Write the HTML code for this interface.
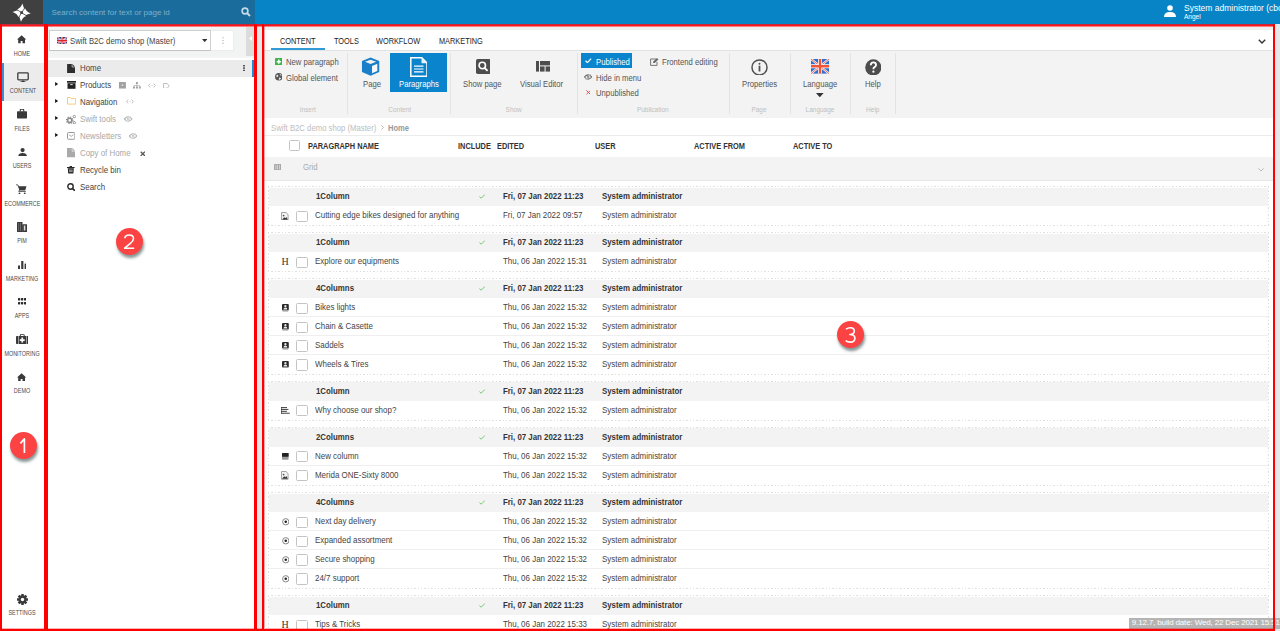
<!DOCTYPE html>
<html><head><meta charset="utf-8">
<style>
*{box-sizing:border-box;margin:0;padding:0}
html,body{width:1280px;height:631px;overflow:hidden;background:#fff;font-family:"Liberation Sans",sans-serif;color:#333}
.a{position:absolute}
.t{position:absolute;white-space:nowrap;line-height:1}
#top{left:0;top:0;width:1280px;height:24px;background:#0784c6}
#logo{left:0;top:0;width:43px;height:24px;background:#404040}
#srch{left:43px;top:0;width:212px;height:24px;background:#196c9b}
.nav{left:0;width:44px;height:37.5px}
.nav .t{width:44px;text-align:center;font-size:5.6px;color:#444;top:25px;left:0}
.nav svg{position:absolute;left:16px;top:8px}
.nl{left:0;width:44px;text-align:center;font-size:6.8px;color:#4a4a4a;transform:scaleX(0.8)}
.tab{top:36.7px;font-size:8.5px;color:#222;transform:scaleX(0.865);transform-origin:0 0}
.sep{top:53.3px;width:1px;height:60.4px;background:#e3e3e3}
.glab{top:107.2px;font-size:6.5px;color:#c0c0c0;width:40px;text-align:center}
.rb{font-size:8.4px;color:#555;transform:scaleX(0.92);transform-origin:0 0;margin-top:0.4px}
.th{top:142px;font-size:8.6px;font-weight:bold;color:#333;transform:scaleX(0.86);transform-origin:0 0}
.cb{position:absolute;left:296.4px;width:11.8px;height:11.2px;margin-top:-0.2px;border:1px solid #c4c4c4;border-radius:1.5px;background:#fff}
.dh{left:267.5px;width:1001px;height:1px;background:repeating-linear-gradient(90deg,#e0e0e0 0 1.4px,transparent 1.4px 3.4px)}
.dv{width:1px;background:repeating-linear-gradient(180deg,#e0e0e0 0 1.4px,transparent 1.4px 3.4px)}
.hb{font-size:8.7px;font-weight:bold;color:#333;transform:scaleX(0.905);transform-origin:0 0;margin-top:-0.6px}
.rr{font-size:8.7px;color:#444;transform:scaleX(0.915);transform-origin:0 0;margin-top:-0.6px}
.tr{font-size:8.7px;transform:scaleX(0.91);transform-origin:0 0}
.red{position:absolute;background:#ff0000}
.circ{position:absolute;width:27px;height:27px;border-radius:50%;background:#fb4343;box-shadow:1px 3px 3px rgba(40,60,60,.55);color:#fff;font-size:17px;text-align:center;line-height:27px}
</style></head><body>
<!-- top bar -->
<div id="top" class="a"></div>
<div id="logo" class="a">
<svg class="a" style="left:12.3px;top:2.8px" width="19.4" height="19.4" viewBox="-10 -10 20 20"><g fill="#fff"><path d="M-9.4 -0.7 L-1.9 -3.3 L-1.1 1 L-3.4 4.8 Q-4.6 0.9 -9.4 -0.7Z"/><path d="M-9.4 -0.7 L-1.9 -3.3 L-1.1 1 L-3.4 4.8 Q-4.6 0.9 -9.4 -0.7Z" transform="rotate(90)"/><path d="M-9.4 -0.7 L-1.9 -3.3 L-1.1 1 L-3.4 4.8 Q-4.6 0.9 -9.4 -0.7Z" transform="rotate(180)"/><path d="M-9.4 -0.7 L-1.9 -3.3 L-1.1 1 L-3.4 4.8 Q-4.6 0.9 -9.4 -0.7Z" transform="rotate(270)"/></g><g stroke="#404040" stroke-width="0.8"><path d="M-0.3 0.3 L-3.3 5.3"/><path d="M-0.3 0.3 L-3.3 5.3" transform="rotate(90)"/><path d="M-0.3 0.3 L-3.3 5.3" transform="rotate(180)"/><path d="M-0.3 0.3 L-3.3 5.3" transform="rotate(270)"/></g><rect x="-1.1" y="-1.1" width="2.2" height="2.2" fill="#404040" transform="rotate(20)"/></svg>
</div>
<div id="srch" class="a">
<div class="t" style="left:8.5px;top:8.5px;font-size:8px;color:#7fb0cc">Search content for text or page id</div>
<svg class="a" style="left:198px;top:7px" width="10" height="10" viewBox="0 0 10 10"><circle cx="4" cy="4" r="2.9" fill="none" stroke="#c8dce8" stroke-width="1.6"/><path d="M6 6 L9 9" stroke="#c8dce8" stroke-width="1.8"/></svg>
</div>
<svg class="a" style="left:1164px;top:5px" width="12" height="12" viewBox="0 0 12 12"><circle cx="6" cy="3" r="2.8" fill="#fff"/><path d="M0 12 Q0 7 6 7 Q12 7 12 12Z" fill="#fff"/></svg>
<div class="t" style="left:1184.3px;top:4px;font-size:9px;color:#fff;transform:scaleX(0.945);transform-origin:0 0">System administrator (cbo</div>
<div class="t" style="left:1184px;top:13.5px;font-size:6.5px;color:#fff">Angel</div>

<!-- left nav -->
<div class="a" style="left:0;top:24px;width:44px;height:607px;background:#fff"></div>
<div class="a" style="left:0;top:63px;width:44px;height:37.5px;background:#ececec"></div>
<div class="a" style="left:2px;top:63px;width:1.5px;height:37.5px;background:#3d8fd0"></div>
<svg class="a" style="left:17.4px;top:35.3px" width="9.2" height="8.6" viewBox="0 0 10 9.3"><path d="M5 0.3 L0 4.8 L1.3 4.8 L1.3 9 L4 9 L4 6.5 L6 6.5 L6 9 L8.7 9 L8.7 4.8 L10 4.8Z" fill="#3a3a3a"/></svg>
<div class="t nl" style="top:50.6px">HOME</div>
<svg class="a" style="left:17.3px;top:72px" width="12" height="10" viewBox="0 0 12 10"><rect x="0.8" y="0.8" width="10.4" height="7" rx="0.8" fill="none" stroke="#3a3a3a" stroke-width="1.3"/><path d="M4.5 10 L6 8 L7.5 10Z" fill="#3a3a3a"/><rect x="3.5" y="9.3" width="5" height="0.8" fill="#3a3a3a"/></svg>
<div class="t nl" style="top:88.1px;left:1px">CONTENT</div>
<svg class="a" style="left:17px;top:109px" width="10" height="10" viewBox="0 0 10 10"><rect x="0" y="2.2" width="10" height="7.3" rx="0.7" fill="#3a3a3a"/><path d="M3.3 2.5 V1 Q3.3 0.2 4 0.2 H6 Q6.7 0.2 6.7 1 V2.5" fill="none" stroke="#3a3a3a" stroke-width="1.1"/></svg>
<div class="t nl" style="top:125.6px">FILES</div>
<svg class="a" style="left:17.5px;top:147.9px" width="9.2" height="8.5" viewBox="0 0 9.2 8.5"><circle cx="4.6" cy="2.1" r="2.1" fill="#3a3a3a"/><path d="M0.2 8.5 Q0.2 5.1 4.6 5.1 Q9 5.1 9 8.5Z" fill="#3a3a3a"/></svg>
<div class="t nl" style="top:163.1px">USERS</div>
<svg class="a" style="left:16px;top:183.7px" width="11" height="10.3" viewBox="0 0 11 10.3"><path d="M0 0.5 H1.8 L3 2.2 H10.5 L9.2 6.4 H3.5 L3.1 7 H9.8 V7.8 H2.2 L3.2 5.6 L1.5 1.3 H0Z" fill="#3a3a3a"/><circle cx="3.5" cy="9.3" r="0.9" fill="#3a3a3a"/><circle cx="8.7" cy="9.3" r="0.9" fill="#3a3a3a"/></svg>
<div class="t nl" style="top:200.6px">ECOMMERCE</div>
<svg class="a" style="left:16.8px;top:222px" width="10.3" height="10" viewBox="0 0 10.3 10"><rect x="0" y="0" width="5.5" height="10" rx="0.6" fill="#3a3a3a"/><rect x="5.2" y="2.3" width="5" height="7.7" rx="0.6" fill="#3a3a3a"/><g fill="#9a9a9a"><rect x="1.6" y="1" width="0.5" height="8"/><rect x="3.4" y="1" width="0.5" height="8"/><rect x="6.8" y="3.5" width="1.6" height="5" fill="#ddd"/></g></svg>
<div class="t nl" style="top:238.1px">PIM</div>
<svg class="a" style="left:17.8px;top:260.7px" width="8.6" height="8.1" viewBox="0 0 8.6 8.1"><rect x="0" y="4.5" width="2" height="3.6" fill="#3a3a3a"/><rect x="3.2" y="0" width="2.2" height="8.1" fill="#3a3a3a"/><rect x="6.6" y="2.6" width="2" height="5.5" fill="#3a3a3a"/></svg>
<div class="t nl" style="top:275.6px">MARKETING</div>
<svg class="a" style="left:18px;top:298px" width="8.2" height="6.6" viewBox="0 0 8.2 6.6"><g fill="#2a2a2a"><rect x="0" y="0" width="2.2" height="2.6" rx=".5"/><rect x="3" y="0" width="2.2" height="2.6" rx=".5"/><rect x="6" y="0" width="2.2" height="2.6" rx=".5"/><rect x="0" y="3.9" width="2.2" height="2.6" rx=".5"/><rect x="3" y="3.9" width="2.2" height="2.6" rx=".5"/><rect x="6" y="3.9" width="2.2" height="2.6" rx=".5"/></g></svg>
<div class="t nl" style="top:313.1px">APPS</div>
<svg class="a" style="left:15.6px;top:333.9px" width="12.5" height="10" viewBox="0 0 12.5 10"><rect x="0" y="2" width="12.5" height="8" rx="0.8" fill="#3a3a3a"/><path d="M4.3 2 V1 Q4.3 0.3 5 0.3 H7.5 Q8.2 0.3 8.2 1 V2" fill="none" stroke="#3a3a3a" stroke-width="1"/><path d="M5.4 3.6 H7.1 V5.2 H8.7 V6.9 H7.1 V8.5 H5.4 V6.9 H3.8 V5.2 H5.4Z" fill="#fff"/><rect x="2" y="2" width="0.5" height="8" fill="#fff"/><rect x="10" y="2" width="0.5" height="8" fill="#fff"/></svg>
<div class="t nl" style="top:350.6px">MONITORING</div>
<svg class="a" style="left:17.4px;top:372.8px" width="9.2" height="8.6" viewBox="0 0 10 9.3"><path d="M5 0.3 L0 4.8 L1.3 4.8 L1.3 9 L4 9 L4 6.5 L6 6.5 L6 9 L8.7 9 L8.7 4.8 L10 4.8Z" fill="#3a3a3a"/></svg>
<div class="t nl" style="top:388.1px">DEMO</div>
<svg class="a" style="left:16.6px;top:594.1px" width="11" height="11" viewBox="-5.5 -5.5 11 11"><g fill="#3a3a3a"><rect x="-1.35" y="-5.5" width="2.7" height="3" rx="0.4" transform="rotate(0)"/><rect x="-1.35" y="-5.5" width="2.7" height="3" rx="0.4" transform="rotate(45)"/><rect x="-1.35" y="-5.5" width="2.7" height="3" rx="0.4" transform="rotate(90)"/><rect x="-1.35" y="-5.5" width="2.7" height="3" rx="0.4" transform="rotate(135)"/><rect x="-1.35" y="-5.5" width="2.7" height="3" rx="0.4" transform="rotate(180)"/><rect x="-1.35" y="-5.5" width="2.7" height="3" rx="0.4" transform="rotate(225)"/><rect x="-1.35" y="-5.5" width="2.7" height="3" rx="0.4" transform="rotate(270)"/><rect x="-1.35" y="-5.5" width="2.7" height="3" rx="0.4" transform="rotate(315)"/><circle r="3.9"/></g><circle r="1.7" fill="#fff"/></svg>
<div class="t nl" style="top:610.4px">SETTINGS</div>


<!-- panel 2 -->
<div class="a" style="left:46px;top:24px;width:210px;height:607px;background:#fff"></div>
<div class="a" style="left:46px;top:24px;width:210px;height:34px;background:#f3f5f5"></div>


<div class="a" style="left:48px;top:26px;width:206px;height:31.2px;background:#f2f3f3"></div>
<div class="a" style="left:49.2px;top:30.3px;width:161.5px;height:20.6px;background:#fff;border:1px solid #cfcfcf;border-bottom-color:#c4c4c4"></div>
<svg class="a" style="left:57px;top:37px" width="10.2" height="7.4" viewBox="0 0 60 30" preserveAspectRatio="none"><rect width="60" height="30" fill="#2b3f8f"/><path d="M0 0 L60 30 M60 0 L0 30" stroke="#fff" stroke-width="6"/><path d="M0 0 L60 30 M60 0 L0 30" stroke="#d8232a" stroke-width="3"/><path d="M30 0 V30 M0 15 H60" stroke="#fff" stroke-width="10"/><path d="M30 0 V30 M0 15 H60" stroke="#d8232a" stroke-width="6"/></svg>
<div class="t" style="left:70.1px;top:36.6px;font-size:8.5px;color:#444;transform:scaleX(0.91);transform-origin:0 0">Swift B2C demo shop (Master)</div>
<svg class="a" style="left:201.8px;top:38.8px" width="5.4" height="3.2" viewBox="0 0 6 3.5"><path d="M0 0 H6 L3 3.5Z" fill="#333"/></svg>
<div class="a" style="left:210.5px;top:30.3px;width:23.5px;height:20.6px;background:#fff;border:1px solid #ececec;border-left:none"></div>
<svg class="a" style="left:221.5px;top:37px" width="2" height="7" viewBox="0 0 2 7"><g fill="#999"><circle cx="1" cy="0.8" r="0.6"/><circle cx="1" cy="3.5" r="0.6"/><circle cx="1" cy="6.2" r="0.6"/></g></svg>
<div class="a" style="left:246px;top:26.6px;width:8.3px;height:29.4px;background:#dcdcdc"></div>
<svg class="a" style="left:249px;top:36.3px" width="3" height="5" viewBox="0 0 3 5"><path d="M3 0 V5 L0 2.5Z" fill="#fff"/></svg>
<div class="a" style="left:48px;top:59.8px;width:206px;height:16.9px;background:#ebebeb"></div>
<div class="a" style="left:252px;top:59.8px;width:2.3px;height:17px;background:#1f87d3"></div>
<svg class="a" style="left:243px;top:65.2px" width="2" height="6.2" viewBox="0 0 2 6.2"><g fill="#333"><rect x="0.2" y="0" width="1.6" height="1.5"/><rect x="0.2" y="2.35" width="1.6" height="1.5"/><rect x="0.2" y="4.7" width="1.6" height="1.5"/></g></svg>
<svg class="a" style="left:67px;top:63.6px" width="8.2" height="9" viewBox="0 0 8 9"><path d="M0 0 H5.2 L8 2.8 V9 H0Z" fill="#2e2e2e"/><path d="M5 0.3 V3 H7.7" fill="none" stroke="#fff" stroke-width="0.6"/></svg>
<div class="t tr" style="left:80.3px;top:64.1px;color:#444">Home</div>
<svg class="a" style="left:55.4px;top:82.1px" width="3.3" height="4" viewBox="0 0 3 4"><path d="M0 0 L3 2 L0 4Z" fill="#111"/></svg>
<svg class="a" style="left:66.5px;top:81.4px" width="9" height="7.8" viewBox="0 0 9 7.8"><rect x="0" y="0" width="9" height="1.7" fill="#222"/><rect x="0.5" y="2.2" width="8" height="5.6" fill="#222"/><rect x="3.3" y="3.2" width="2.4" height="0.9" fill="#fff"/></svg>
<div class="t tr" style="left:80.3px;top:81.1px;color:#444">Products</div>
<svg class="a" style="left:55.4px;top:98.8px" width="3.3" height="4" viewBox="0 0 3 4"><path d="M0 0 L3 2 L0 4Z" fill="#111"/></svg>
<svg class="a" style="left:66.5px;top:97.4px" width="9.2" height="7.6" viewBox="0 0 9.2 7.6"><path d="M0.5 0.5 H3.5 L4.4 1.6 H8.7 V7.1 H0.5Z" fill="none" stroke="#f7c46e" stroke-width="0.9"/></svg>
<div class="t tr" style="left:80.3px;top:97.8px;color:#444">Navigation</div>
<svg class="a" style="left:55.4px;top:115.7px" width="3.3" height="4" viewBox="0 0 3 4"><path d="M0 0 L3 2 L0 4Z" fill="#111"/></svg>
<svg class="a" style="left:66px;top:114.7px" width="10" height="9.4" viewBox="0 0 10 9.4"><circle cx="3.7" cy="5.3" r="2.1" fill="none" stroke="#8a8a8a" stroke-width="1.5"/><circle cx="3.7" cy="5.3" r="3.2" fill="none" stroke="#8a8a8a" stroke-width="1.3" stroke-dasharray="1.2 1.3"/><circle cx="8.3" cy="1.6" r="1.2" fill="none" stroke="#8a8a8a" stroke-width="0.9"/><circle cx="8.3" cy="7.8" r="1.2" fill="none" stroke="#8a8a8a" stroke-width="0.9"/></svg>
<div class="t tr" style="left:80.3px;top:114.7px;color:#a8a8a8">Swift tools</div>
<svg class="a" style="left:55.4px;top:132.8px" width="3.3" height="4" viewBox="0 0 3 4"><path d="M0 0 L3 2 L0 4Z" fill="#111"/></svg>
<svg class="a" style="left:66.6px;top:132.1px" width="8.4" height="7.8" viewBox="0 0 8.4 7.8"><rect x="0.5" y="0.5" width="7.4" height="6.8" rx="1" fill="none" stroke="#999" stroke-width="1"/><path d="M1.8 2.6 L4.2 4.4 L6.6 2.6" fill="none" stroke="#999" stroke-width="0.8"/></svg>
<div class="t tr" style="left:80.3px;top:131.8px;color:#a8a8a8">Newsletters</div>
<svg class="a" style="left:66.8px;top:148.2px" width="8.2" height="9.4" viewBox="0 0 8 9"><path d="M0 0 H5.2 L8 2.8 V9 H0Z" fill="#a9a9a9"/><path d="M5 0.3 V3 H7.7" fill="none" stroke="#fff" stroke-width="0.6"/></svg>
<div class="t tr" style="left:80.3px;top:149.1px;color:#a8a8a8">Copy of Home</div>
<svg class="a" style="left:67.2px;top:166.3px" width="7.6" height="7.6" viewBox="0 0 7.6 7.6"><rect x="0" y="1" width="7.6" height="1.1" fill="#2a2a2a"/><rect x="2.6" y="0" width="2.4" height="1" fill="#2a2a2a"/><path d="M0.8 2.3 H6.8 L6.4 7.6 H1.2Z" fill="#2a2a2a"/><rect x="2" y="3.5" width="3.6" height="2.6" fill="#888"/></svg>
<div class="t tr" style="left:80.3px;top:166.0px;color:#444">Recycle bin</div>
<svg class="a" style="left:66.6px;top:183px" width="8.6" height="8.2" viewBox="0 0 8.6 8.2"><circle cx="3.5" cy="3.5" r="2.7" fill="none" stroke="#2a2a2a" stroke-width="1.4"/><path d="M5.4 5.4 L8 8" stroke="#2a2a2a" stroke-width="1.6"/></svg>
<div class="t tr" style="left:80.3px;top:182.6px;color:#444">Search</div>
<svg class="a" style="left:119.1px;top:82.2px" width="6.9" height="6.6" viewBox="0 0 7 6.6"><rect width="7" height="6.6" fill="#a0a0a0"/><rect x="2.6" y="2.4" width="1.8" height="1.6" fill="#d8d8d8"/></svg>
<svg class="a" style="left:133px;top:82.2px" width="7.8" height="6.6" viewBox="0 0 8 6.6"><g fill="#a0a0a0"><rect x="3" y="0" width="2" height="2"/><rect x="3.7" y="2" width="0.6" height="1.5"/><rect x="0.9" y="3" width="6.2" height="0.6"/><rect x="0" y="4.4" width="2" height="2.2"/><rect x="3" y="4.4" width="2" height="2.2"/><rect x="6" y="4.4" width="2" height="2.2"/></g></svg>
<svg class="a" style="left:147.8px;top:83px" width="7.8" height="5" viewBox="0 0 8 5"><path d="M2.2 0.5 L0.6 2.5 L2.2 4.5 M5.8 0.5 L7.4 2.5 L5.8 4.5" fill="none" stroke="#b8b8b8" stroke-width="0.9"/><g fill="#b8b8b8"><circle cx="3.2" cy="2.5" r="0.45"/><circle cx="4.8" cy="2.5" r="0.45"/></g></svg>
<svg class="a" style="left:163px;top:82.6px" width="6.6" height="5.8" viewBox="0 0 6.6 5.8"><path d="M0.5 0.5 H4.2 L6.1 2.9 L4.2 5.3 H0.5Z" fill="none" stroke="#b8b8b8" stroke-width="0.9"/></svg>
<svg class="a" style="left:126.4px;top:99.3px" width="7.8" height="5" viewBox="0 0 8 5"><path d="M2.2 0.5 L0.6 2.5 L2.2 4.5 M5.8 0.5 L7.4 2.5 L5.8 4.5" fill="none" stroke="#b8b8b8" stroke-width="0.9"/><g fill="#b8b8b8"><circle cx="3.2" cy="2.5" r="0.45"/><circle cx="4.8" cy="2.5" r="0.45"/></g></svg>
<svg class="a" style="left:124.3px;top:115.8px" width="8.4" height="6" viewBox="0 0 8.4 6"><path d="M0.4 3 Q4.2 -1.4 8 3 Q4.2 7.4 0.4 3Z" fill="none" stroke="#b0b0b0" stroke-width="1.1"/><circle cx="4.2" cy="3" r="1.3" fill="#b0b0b0"/><path d="M1.8 5.9 L6.6 0.1" stroke="#fff" stroke-width="1.3"/><path d="M2 5.7 L6.4 0.3" stroke="#b0b0b0" stroke-width="0.7"/></svg>
<svg class="a" style="left:128.7px;top:133.2px" width="8.4" height="6" viewBox="0 0 8.4 6"><path d="M0.4 3 Q4.2 -1.4 8 3 Q4.2 7.4 0.4 3Z" fill="none" stroke="#b0b0b0" stroke-width="1.1"/><circle cx="4.2" cy="3" r="1.3" fill="#b0b0b0"/><path d="M1.8 5.9 L6.6 0.1" stroke="#fff" stroke-width="1.3"/><path d="M2 5.7 L6.4 0.3" stroke="#b0b0b0" stroke-width="0.7"/></svg>
<svg class="a" style="left:139.8px;top:150.7px" width="5.6" height="5.6" viewBox="0 0 5.6 5.6"><path d="M0.7 0.7 L4.9 4.9 M4.9 0.7 L0.7 4.9" stroke="#555" stroke-width="1.3"/></svg>

<!-- strip -->
<div class="a" style="left:256px;top:24px;width:7px;height:607px;background:#e6e9ea"></div>
<div class="a" style="left:1274px;top:24px;width:6px;height:607px;background:#e6e9ea"></div>

<!-- panel 3 -->
<div class="a" style="left:263px;top:24px;width:1011px;height:607px;background:#fff"></div>


<!-- panel3 header -->
<div class="a" style="left:264px;top:26.5px;width:1009px;height:3.3px;background:#eef0f0"></div>
<div class="a" style="left:264px;top:49.9px;width:1009px;height:1.2px;background:#e2e2e2"></div>
<div class="a" style="left:264px;top:51px;width:1009px;height:66.8px;background:#f3f3f3"></div>
<div class="t tab" style="left:280.2px">CONTENT</div>
<div class="t tab" style="left:334.3px">TOOLS</div>
<div class="t tab" style="left:376.3px">WORKFLOW</div>
<div class="t tab" style="left:439px">MARKETING</div>
<div class="a" style="left:271.1px;top:48px;width:53.7px;height:2px;background:#2f9ad6"></div>
<svg class="a" style="left:1257.5px;top:39px" width="8" height="5" viewBox="0 0 8 5"><path d="M0.8 0.8 L4 4 L7.2 0.8" fill="none" stroke="#333" stroke-width="1.4"/></svg>
<!-- separators -->
<div class="a sep" style="left:347px"></div>
<div class="a sep" style="left:450.3px"></div>
<div class="a sep" style="left:577px"></div>
<div class="a sep" style="left:728.5px"></div>
<div class="a sep" style="left:789.8px"></div>
<div class="a sep" style="left:850px"></div>
<div class="a sep" style="left:895.3px"></div>
<!-- group labels -->
<div class="t glab" style="left:287.8px">Insert</div>
<div class="t glab" style="left:379.7px">Content</div>
<div class="t glab" style="left:493.7px">Show</div>
<div class="t glab" style="left:632.8px">Publication</div>
<div class="t glab" style="left:739px">Page</div>
<div class="t glab" style="left:800px">Language</div>
<div class="t glab" style="left:852.8px">Help</div>
<!-- insert -->
<svg class="a" style="left:274.8px;top:57.9px" width="7.6" height="7.4" viewBox="0 0 7.6 7.4"><rect width="7.6" height="7.4" rx="1" fill="#3db54a"/><path d="M3.8 1.6 V5.8 M1.7 3.7 H5.9" stroke="#fff" stroke-width="1.5"/></svg>
<div class="t rb" style="left:286px;top:58.1px">New paragraph</div>
<svg class="a" style="left:274.8px;top:73.3px" width="7.6" height="7.6" viewBox="0 0 10 10"><circle cx="5" cy="5" r="5" fill="#555"/><path d="M2 2.5 Q3.5 2 4.5 3.5 Q4 5 2.5 5.5 Q1.2 4.5 2 2.5Z M5.5 6 Q7 5.5 8 7 Q7 9 5 9.2 Q5 7.5 5.5 6Z M6 1 Q8 1.5 9 3.5 Q7.5 3.5 6.5 2.5Z" fill="#eee"/></svg>
<div class="t rb" style="left:286px;top:73.5px">Global element</div>
<!-- page cube -->
<svg class="a" style="left:361px;top:57.3px" width="19.2" height="19.3" viewBox="0 0 20 20"><path d="M10 0.5 L19 4.2 V15.5 L10 19.5 L1 15.5 V4.2Z" fill="#1a7fc8"/><path d="M10 2.8 L15.8 5 L10 7.3 L4.2 5Z" fill="#f3f3f3"/><path d="M11.5 9.2 L17 7 V14.5 L11.5 17Z" fill="#f8f8f8"/></svg>
<div class="t rb" style="left:362.6px;top:80.1px">Page</div>
<!-- paragraphs btn -->
<div class="a" style="left:390px;top:53px;width:56.8px;height:39.4px;background:#0a84cc"></div>
<svg class="a" style="left:409.6px;top:56.6px" width="17.8" height="20" viewBox="0 0 17.8 20"><path d="M0.8 0.8 H11.8 L17 6 V19.2 H0.8Z" fill="none" stroke="#fff" stroke-width="1.5"/><path d="M11.5 0.8 V6.3 H17" fill="#e8f2fa"/><path d="M4 9.2 H13.5 M4 12 H13.5 M4 14.8 H13.5" stroke="#fff" stroke-width="1.2"/></svg>
<div class="t rb" style="left:398.6px;top:80.1px;color:#fff">Paragraphs</div>
<!-- show page -->
<svg class="a" style="left:475.8px;top:58.9px" width="14.6" height="15" viewBox="0 0 14.6 15"><rect width="14.6" height="15" rx="1.8" fill="#4d4d4d"/><circle cx="6.3" cy="6.5" r="3.2" fill="none" stroke="#fff" stroke-width="1.6"/><path d="M8.6 8.9 L11.6 11.9" stroke="#fff" stroke-width="1.8"/></svg>
<div class="t rb" style="left:463.4px;top:80.1px">Show page</div>
<svg class="a" style="left:535.6px;top:61.1px" width="14.2" height="10.6" viewBox="0 0 14.2 10.6"><g fill="#4d4d4d"><rect x="0" y="0" width="3" height="10.6"/><rect x="4" y="0" width="10.2" height="4.4"/><rect x="4" y="5.4" width="4.6" height="5.2"/><rect x="9.6" y="5.4" width="4.6" height="5.2"/></g></svg>
<div class="t rb" style="left:520.1px;top:80.1px">Visual Editor</div>
<!-- publication -->
<div class="a" style="left:580.9px;top:53.3px;width:51px;height:15.2px;background:#0a84cc"></div>
<svg class="a" style="left:585px;top:57.6px" width="6.6" height="5.4" viewBox="0 0 6.6 5.4"><path d="M0.5 2.8 L2.4 4.6 L6.1 0.6" fill="none" stroke="#fff" stroke-width="1.2"/></svg>
<div class="t rb" style="left:595.6px;top:57.5px;color:#fff">Published</div>
<svg class="a" style="left:650px;top:58px" width="9" height="8" viewBox="0 0 9 8"><path d="M6 1 H0.6 V7.4 H7 V4" fill="none" stroke="#666" stroke-width="0.9"/><path d="M3 5 L3.3 3.6 L7 0 L8.4 1.4 L4.7 5Z" fill="#666"/></svg>
<div class="t rb" style="left:661.8px;top:57.5px">Frontend editing</div>
<svg class="a" style="left:583.9px;top:74.4px" width="8.2" height="6" viewBox="0 0 8.4 6"><path d="M0.4 3 Q4.2 -1.4 8 3 Q4.2 7.4 0.4 3Z" fill="none" stroke="#666" stroke-width="1.1"/><circle cx="4.2" cy="3" r="1.3" fill="#666"/><path d="M1.8 5.9 L6.6 0.1" stroke="#f3f3f3" stroke-width="1.3"/><path d="M2 5.7 L6.4 0.3" stroke="#666" stroke-width="0.7"/></svg>
<div class="t rb" style="left:595.6px;top:73.3px">Hide in menu</div>
<svg class="a" style="left:585.6px;top:90.3px" width="4.8" height="4.8" viewBox="0 0 4.8 4.8"><path d="M0.4 0.4 L4.4 4.4 M4.4 0.4 L0.4 4.4" stroke="#f04a4a" stroke-width="1"/></svg>
<div class="t rb" style="left:595.6px;top:88.6px">Unpublished</div>
<!-- properties -->
<svg class="a" style="left:750.5px;top:58.5px" width="17" height="16.8" viewBox="0 0 17 17"><circle cx="8.5" cy="8.5" r="7.6" fill="none" stroke="#505050" stroke-width="1.5"/><circle cx="8.5" cy="4.9" r="1" fill="#505050"/><rect x="7.6" y="6.8" width="1.8" height="5.8" fill="#505050"/></svg>
<div class="t rb" style="left:741.7px;top:80.1px">Properties</div>
<svg class="a" style="left:811px;top:59.3px" width="18" height="14.6" viewBox="0 0 60 48" preserveAspectRatio="none"><rect width="60" height="48" fill="#2f6fd0"/><path d="M0 0 L60 48 M60 0 L0 48" stroke="#fff" stroke-width="7"/><path d="M0 0 L60 48 M60 0 L0 48" stroke="#f0553a" stroke-width="3"/><path d="M30 0 V48 M0 24 H60" stroke="#fff" stroke-width="13"/><path d="M30 0 V48 M0 24 H60" stroke="#f0553a" stroke-width="8"/></svg>
<div class="t rb" style="left:802.8px;top:80.1px">Language</div>
<svg class="a" style="left:816px;top:92.8px" width="7.6" height="4.3" viewBox="0 0 7.6 4.3"><path d="M0 0 H7.6 L3.8 4.3Z" fill="#333"/></svg>
<svg class="a" style="left:864.7px;top:58.5px" width="16.6" height="16.8" viewBox="0 0 17 17"><circle cx="8.5" cy="8.5" r="8.3" fill="#4d4d4d"/><path d="M5.9 6.2 Q5.9 3.4 8.6 3.4 Q11.3 3.4 11.3 6 Q11.3 7.5 9.5 8.4 Q8.6 8.9 8.6 10.3" fill="none" stroke="#fff" stroke-width="1.9"/><circle cx="8.6" cy="12.9" r="1.15" fill="#fff"/></svg>
<div class="t rb" style="left:864.8px;top:80.1px">Help</div>


<!-- breadcrumb & header -->
<div class="t" style="left:271.2px;top:123.6px;font-size:8.7px;color:#bdbdbd;transform:scaleX(0.89);transform-origin:0 0">Swift B2C demo shop (Master)</div>
<svg class="a" style="left:380.8px;top:125px" width="3" height="5" viewBox="0 0 3 5"><path d="M0.4 0.4 L2.5 2.5 L0.4 4.6" fill="none" stroke="#aaa" stroke-width="0.8"/></svg>
<div class="t" style="left:387.8px;top:123.6px;font-size:8.7px;color:#9a9a9a;font-weight:bold;transform:scaleX(0.87);transform-origin:0 0">Home</div>
<div class="a" style="left:264px;top:135px;width:1009px;height:1px;background:#ececec"></div>
<div class="a cb" style="left:288.6px;top:140.2px"></div>
<div class="t th" style="left:307.8px">PARAGRAPH NAME</div>
<div class="t th" style="left:458.2px">INCLUDE</div>
<div class="t th" style="left:496.5px">EDITED</div>
<div class="t th" style="left:594.7px">USER</div>
<div class="t th" style="left:693.7px">ACTIVE FROM</div>
<div class="t th" style="left:792.5px">ACTIVE TO</div>
<div class="a" style="left:264px;top:157.2px;width:1009px;height:22.8px;background:#f3f3f3"></div>
<div class="a" style="left:264px;top:180px;width:1009px;height:1px;background:#e6e6e6"></div>
<svg class="a" style="left:274px;top:163.8px" width="7.2" height="6.2" viewBox="0 0 7.2 6.2"><rect width="7.2" height="6.2" rx="0.6" fill="#a8a8a8"/><g fill="#eee"><rect x="1.6" y="0.8" width="0.6" height="4.6"/><rect x="3.3" y="0.8" width="0.6" height="4.6"/><rect x="5" y="0.8" width="0.6" height="4.6"/></g></svg>
<div class="t" style="left:303.4px;top:162.8px;font-size:8.6px;color:#aaa;transform:scaleX(0.9);transform-origin:0 0">Grid</div>
<svg class="a" style="left:1258px;top:167.5px" width="6" height="3.6" viewBox="0 0 6 3.6"><path d="M0.4 0.4 L3 3 L5.6 0.4" fill="none" stroke="#aaa" stroke-width="0.8"/></svg>
<div class="a dh" style="top:186.3px"></div><div class="a dh" style="top:225.2px"></div><div class="a dv" style="left:267.5px;top:186.8px;height:39.4px"></div><div class="a dv" style="left:1267.8px;top:186.8px;height:39.4px"></div>
<div class="a" style="left:268.5px;top:187.6px;width:999.5px;height:18.7px;background:#f3f3f3"></div>
<div class="t hb" style="left:315.6px;top:192.8px">1Column</div>
<svg class="a" style="left:478.9px;top:194.3px" width="6.4" height="4.8" viewBox="0 0 6.4 4.8"><path d="M0.4 2.6 L2.2 4.2 L6 0.4" fill="none" stroke="#6cbf6c" stroke-width="0.9"/></svg>
<div class="t hb" style="left:503.3px;top:192.8px">Fri, 07 Jan 2022 11:23</div>
<div class="t hb" style="left:601.9px;top:192.8px">System administrator</div>
<svg class="a" style="left:281.1px;top:211.5px" width="7.6" height="8.8" viewBox="0 0 7.6 8.8"><path d="M0.5 0.5 H5 L7.1 2.6 V8.3 H0.5Z" fill="#f4f4f4" stroke="#9a9a9a" stroke-width="0.9"/><circle cx="2.6" cy="3.6" r="0.9" fill="#555"/><path d="M1 7.8 L3.2 5.2 L4.3 6.2 L5.3 5 L6.8 7.8Z" fill="#333"/></svg>
<div class="a cb" style="top:210.8px"></div>
<div class="t rr" style="left:315.4px;top:211.8px">Cutting edge bikes designed for anything</div>
<div class="t rr" style="left:503.3px;top:211.8px">Fri, 07 Jan 2022 09:57</div>
<div class="t rr" style="left:601.9px;top:211.8px">System administrator</div>
<div class="a dh" style="top:232.3px"></div><div class="a dh" style="top:271.2px"></div><div class="a dv" style="left:267.5px;top:232.8px;height:39.4px"></div><div class="a dv" style="left:1267.8px;top:232.8px;height:39.4px"></div>
<div class="a" style="left:268.5px;top:233.6px;width:999.5px;height:18.7px;background:#f3f3f3"></div>
<div class="t hb" style="left:315.6px;top:238.8px">1Column</div>
<svg class="a" style="left:478.9px;top:240.3px" width="6.4" height="4.8" viewBox="0 0 6.4 4.8"><path d="M0.4 2.6 L2.2 4.2 L6 0.4" fill="none" stroke="#6cbf6c" stroke-width="0.9"/></svg>
<div class="t hb" style="left:503.3px;top:238.8px">Fri, 07 Jan 2022 11:23</div>
<div class="t hb" style="left:601.9px;top:238.8px">System administrator</div>
<div class="t" style="left:281.6px;top:256.8px;font-family:'Liberation Serif',serif;font-size:10px;color:#333">H</div>
<div class="a cb" style="top:256.8px"></div>
<div class="t rr" style="left:315.4px;top:257.8px">Explore our equipments</div>
<div class="t rr" style="left:503.3px;top:257.8px">Thu, 06 Jan 2022 15:31</div>
<div class="t rr" style="left:601.9px;top:257.8px">System administrator</div>
<div class="a dh" style="top:278.4px"></div><div class="a dh" style="top:374.0px"></div><div class="a dv" style="left:267.5px;top:278.9px;height:96.1px"></div><div class="a dv" style="left:1267.8px;top:278.9px;height:96.1px"></div>
<div class="a" style="left:268.5px;top:279.7px;width:999.5px;height:18.7px;background:#f3f3f3"></div>
<div class="t hb" style="left:315.6px;top:284.8px">4Columns</div>
<svg class="a" style="left:478.9px;top:286.3px" width="6.4" height="4.8" viewBox="0 0 6.4 4.8"><path d="M0.4 2.6 L2.2 4.2 L6 0.4" fill="none" stroke="#6cbf6c" stroke-width="0.9"/></svg>
<div class="t hb" style="left:503.3px;top:284.8px">Fri, 07 Jan 2022 11:23</div>
<div class="t hb" style="left:601.9px;top:284.8px">System administrator</div>
<div class="a" style="left:268.5px;top:316.1px;width:999.5px;height:1px;background:#efefef"></div>
<svg class="a" style="left:282.2px;top:304.2px" width="6.8" height="7.6" viewBox="0 0 6.8 7.6"><rect width="6.8" height="6.4" rx="1" fill="#2a2a2a"/><circle cx="3.4" cy="2.2" r="1.15" fill="#e8e8e8"/><path d="M1.4 5.4 Q1.6 3.6 3.4 3.6 Q5.2 3.6 5.4 5.4Z" fill="#e8e8e8"/><rect x="0.5" y="6.5" width="5.8" height="1.1" fill="#a8a8a8"/></svg>
<div class="a cb" style="top:302.8px"></div>
<div class="t rr" style="left:315.4px;top:303.9px">Bikes lights</div>
<div class="t rr" style="left:503.3px;top:303.9px">Thu, 06 Jan 2022 15:32</div>
<div class="t rr" style="left:601.9px;top:303.9px">System administrator</div>
<div class="a" style="left:268.5px;top:335.0px;width:999.5px;height:1px;background:#efefef"></div>
<svg class="a" style="left:282.2px;top:323.1px" width="6.8" height="7.6" viewBox="0 0 6.8 7.6"><rect width="6.8" height="6.4" rx="1" fill="#2a2a2a"/><circle cx="3.4" cy="2.2" r="1.15" fill="#e8e8e8"/><path d="M1.4 5.4 Q1.6 3.6 3.4 3.6 Q5.2 3.6 5.4 5.4Z" fill="#e8e8e8"/><rect x="0.5" y="6.5" width="5.8" height="1.1" fill="#a8a8a8"/></svg>
<div class="a cb" style="top:321.7px"></div>
<div class="t rr" style="left:315.4px;top:322.8px">Chain &amp; Casette</div>
<div class="t rr" style="left:503.3px;top:322.8px">Thu, 06 Jan 2022 15:32</div>
<div class="t rr" style="left:601.9px;top:322.8px">System administrator</div>
<div class="a" style="left:268.5px;top:353.9px;width:999.5px;height:1px;background:#efefef"></div>
<svg class="a" style="left:282.2px;top:342.0px" width="6.8" height="7.6" viewBox="0 0 6.8 7.6"><rect width="6.8" height="6.4" rx="1" fill="#2a2a2a"/><circle cx="3.4" cy="2.2" r="1.15" fill="#e8e8e8"/><path d="M1.4 5.4 Q1.6 3.6 3.4 3.6 Q5.2 3.6 5.4 5.4Z" fill="#e8e8e8"/><rect x="0.5" y="6.5" width="5.8" height="1.1" fill="#a8a8a8"/></svg>
<div class="a cb" style="top:340.6px"></div>
<div class="t rr" style="left:315.4px;top:341.7px">Saddels</div>
<div class="t rr" style="left:503.3px;top:341.7px">Thu, 06 Jan 2022 15:32</div>
<div class="t rr" style="left:601.9px;top:341.7px">System administrator</div>
<svg class="a" style="left:282.2px;top:360.9px" width="6.8" height="7.6" viewBox="0 0 6.8 7.6"><rect width="6.8" height="6.4" rx="1" fill="#2a2a2a"/><circle cx="3.4" cy="2.2" r="1.15" fill="#e8e8e8"/><path d="M1.4 5.4 Q1.6 3.6 3.4 3.6 Q5.2 3.6 5.4 5.4Z" fill="#e8e8e8"/><rect x="0.5" y="6.5" width="5.8" height="1.1" fill="#a8a8a8"/></svg>
<div class="a cb" style="top:359.5px"></div>
<div class="t rr" style="left:315.4px;top:360.6px">Wheels &amp; Tires</div>
<div class="t rr" style="left:503.3px;top:360.6px">Thu, 06 Jan 2022 15:32</div>
<div class="t rr" style="left:601.9px;top:360.6px">System administrator</div>
<div class="a dh" style="top:381.0px"></div><div class="a dh" style="top:419.9px"></div><div class="a dv" style="left:267.5px;top:381.5px;height:39.4px"></div><div class="a dv" style="left:1267.8px;top:381.5px;height:39.4px"></div>
<div class="a" style="left:268.5px;top:382.3px;width:999.5px;height:18.7px;background:#f3f3f3"></div>
<div class="t hb" style="left:315.6px;top:387.4px">1Column</div>
<svg class="a" style="left:478.9px;top:388.9px" width="6.4" height="4.8" viewBox="0 0 6.4 4.8"><path d="M0.4 2.6 L2.2 4.2 L6 0.4" fill="none" stroke="#6cbf6c" stroke-width="0.9"/></svg>
<div class="t hb" style="left:503.3px;top:387.4px">Fri, 07 Jan 2022 11:23</div>
<div class="t hb" style="left:601.9px;top:387.4px">System administrator</div>
<svg class="a" style="left:281.2px;top:407.2px" width="8.8" height="6.8" viewBox="0 0 8.8 6.8"><g fill="#505050"><rect x="0" y="0" width="6" height="1.1"/><rect x="0" y="1.9" width="7.4" height="1.1"/><rect x="0" y="3.8" width="6" height="1.1"/><rect x="0" y="5.7" width="8.8" height="1.1"/></g><rect x="0" y="0" width="0.6" height="6.8" fill="#333"/></svg>
<div class="a cb" style="top:405.4px"></div>
<div class="t rr" style="left:315.4px;top:406.5px">Why choose our shop?</div>
<div class="t rr" style="left:503.3px;top:406.5px">Thu, 06 Jan 2022 15:32</div>
<div class="t rr" style="left:601.9px;top:406.5px">System administrator</div>
<div class="a dh" style="top:426.9px"></div><div class="a dh" style="top:484.7px"></div><div class="a dv" style="left:267.5px;top:427.4px;height:58.3px"></div><div class="a dv" style="left:1267.8px;top:427.4px;height:58.3px"></div>
<div class="a" style="left:268.5px;top:428.2px;width:999.5px;height:18.7px;background:#f3f3f3"></div>
<div class="t hb" style="left:315.6px;top:433.3px">2Columns</div>
<svg class="a" style="left:478.9px;top:434.8px" width="6.4" height="4.8" viewBox="0 0 6.4 4.8"><path d="M0.4 2.6 L2.2 4.2 L6 0.4" fill="none" stroke="#6cbf6c" stroke-width="0.9"/></svg>
<div class="t hb" style="left:503.3px;top:433.3px">Fri, 07 Jan 2022 11:23</div>
<div class="t hb" style="left:601.9px;top:433.3px">System administrator</div>
<div class="a" style="left:268.5px;top:464.6px;width:999.5px;height:1px;background:#efefef"></div>
<svg class="a" style="left:282.2px;top:453.1px" width="6.6" height="6.7" viewBox="0 0 6.6 6.7"><rect width="6.6" height="6.7" rx="0.6" fill="#9a9a9a"/><rect width="6.6" height="3.8" rx="0.6" fill="#222"/></svg>
<div class="a cb" style="top:451.3px"></div>
<div class="t rr" style="left:315.4px;top:452.4px">New column</div>
<div class="t rr" style="left:503.3px;top:452.4px">Thu, 06 Jan 2022 15:32</div>
<div class="t rr" style="left:601.9px;top:452.4px">System administrator</div>
<svg class="a" style="left:281.1px;top:471.0px" width="7.6" height="8.8" viewBox="0 0 7.6 8.8"><path d="M0.5 0.5 H5 L7.1 2.6 V8.3 H0.5Z" fill="#f4f4f4" stroke="#9a9a9a" stroke-width="0.9"/><circle cx="2.6" cy="3.6" r="0.9" fill="#555"/><path d="M1 7.8 L3.2 5.2 L4.3 6.2 L5.3 5 L6.8 7.8Z" fill="#333"/></svg>
<div class="a cb" style="top:470.2px"></div>
<div class="t rr" style="left:315.4px;top:471.3px">Merida ONE-Sixty 8000</div>
<div class="t rr" style="left:503.3px;top:471.3px">Thu, 06 Jan 2022 15:32</div>
<div class="t rr" style="left:601.9px;top:471.3px">System administrator</div>
<div class="a dh" style="top:492.4px"></div><div class="a dh" style="top:588.0px"></div><div class="a dv" style="left:267.5px;top:492.9px;height:96.1px"></div><div class="a dv" style="left:1267.8px;top:492.9px;height:96.1px"></div>
<div class="a" style="left:268.5px;top:493.7px;width:999.5px;height:18.7px;background:#f3f3f3"></div>
<div class="t hb" style="left:315.6px;top:498.8px">4Columns</div>
<svg class="a" style="left:478.9px;top:500.3px" width="6.4" height="4.8" viewBox="0 0 6.4 4.8"><path d="M0.4 2.6 L2.2 4.2 L6 0.4" fill="none" stroke="#6cbf6c" stroke-width="0.9"/></svg>
<div class="t hb" style="left:503.3px;top:498.8px">Fri, 07 Jan 2022 11:23</div>
<div class="t hb" style="left:601.9px;top:498.8px">System administrator</div>
<div class="a" style="left:268.5px;top:530.1px;width:999.5px;height:1px;background:#efefef"></div>
<svg class="a" style="left:281.9px;top:518.3px" width="7.5" height="7.6" viewBox="0 0 7.6 7.6"><circle cx="3.8" cy="3.8" r="3.2" fill="none" stroke="#777" stroke-width="0.9"/><circle cx="3.8" cy="3.8" r="1.3" fill="#222"/></svg>
<div class="a cb" style="top:516.9px"></div>
<div class="t rr" style="left:315.4px;top:518.0px">Next day delivery</div>
<div class="t rr" style="left:503.3px;top:518.0px">Thu, 06 Jan 2022 15:32</div>
<div class="t rr" style="left:601.9px;top:518.0px">System administrator</div>
<div class="a" style="left:268.5px;top:549.0px;width:999.5px;height:1px;background:#efefef"></div>
<svg class="a" style="left:281.9px;top:537.2px" width="7.5" height="7.6" viewBox="0 0 7.6 7.6"><circle cx="3.8" cy="3.8" r="3.2" fill="none" stroke="#777" stroke-width="0.9"/><circle cx="3.8" cy="3.8" r="1.3" fill="#222"/></svg>
<div class="a cb" style="top:535.8px"></div>
<div class="t rr" style="left:315.4px;top:536.9px">Expanded assortment</div>
<div class="t rr" style="left:503.3px;top:536.9px">Thu, 06 Jan 2022 15:32</div>
<div class="t rr" style="left:601.9px;top:536.9px">System administrator</div>
<div class="a" style="left:268.5px;top:567.9px;width:999.5px;height:1px;background:#efefef"></div>
<svg class="a" style="left:281.9px;top:556.1px" width="7.5" height="7.6" viewBox="0 0 7.6 7.6"><circle cx="3.8" cy="3.8" r="3.2" fill="none" stroke="#777" stroke-width="0.9"/><circle cx="3.8" cy="3.8" r="1.3" fill="#222"/></svg>
<div class="a cb" style="top:554.6px"></div>
<div class="t rr" style="left:315.4px;top:555.8px">Secure shopping</div>
<div class="t rr" style="left:503.3px;top:555.8px">Thu, 06 Jan 2022 15:32</div>
<div class="t rr" style="left:601.9px;top:555.8px">System administrator</div>
<svg class="a" style="left:281.9px;top:575.0px" width="7.5" height="7.6" viewBox="0 0 7.6 7.6"><circle cx="3.8" cy="3.8" r="3.2" fill="none" stroke="#777" stroke-width="0.9"/><circle cx="3.8" cy="3.8" r="1.3" fill="#222"/></svg>
<div class="a cb" style="top:573.6px"></div>
<div class="t rr" style="left:315.4px;top:574.7px">24/7 support</div>
<div class="t rr" style="left:503.3px;top:574.7px">Thu, 06 Jan 2022 15:32</div>
<div class="t rr" style="left:601.9px;top:574.7px">System administrator</div>
<div class="a dh" style="top:595.4px"></div><div class="a dh" style="top:634.3px"></div><div class="a dv" style="left:267.5px;top:595.9px;height:39.4px"></div><div class="a dv" style="left:1267.8px;top:595.9px;height:39.4px"></div>
<div class="a" style="left:268.5px;top:596.7px;width:999.5px;height:18.7px;background:#f3f3f3"></div>
<div class="t hb" style="left:315.6px;top:601.8px">1Column</div>
<svg class="a" style="left:478.9px;top:603.3px" width="6.4" height="4.8" viewBox="0 0 6.4 4.8"><path d="M0.4 2.6 L2.2 4.2 L6 0.4" fill="none" stroke="#6cbf6c" stroke-width="0.9"/></svg>
<div class="t hb" style="left:503.3px;top:601.8px">Fri, 07 Jan 2022 11:23</div>
<div class="t hb" style="left:601.9px;top:601.8px">System administrator</div>
<div class="t" style="left:281.6px;top:619.9px;font-family:'Liberation Serif',serif;font-size:10px;color:#333">H</div>
<div class="a cb" style="top:619.9px"></div>
<div class="t rr" style="left:315.4px;top:621.0px">Tips &amp; Tricks</div>
<div class="t rr" style="left:503.3px;top:621.0px">Thu, 06 Jan 2022 15:33</div>
<div class="t rr" style="left:601.9px;top:621.0px">System administrator</div>
<div class="t" style="left:1128.8px;top:618px;width:151.2px;height:10.5px;background:#b4b4b4;color:#fff;font-size:8px;line-height:10.5px;padding-left:3px;letter-spacing:-0.15px">9.12.7, build date: Wed, 22 Dec 2021 15:51</div>

<!-- red annotation boxes -->
<div class="a" style="left:0;top:24px;width:1275px;height:3px;background:linear-gradient(#c4283a 0 1px,#ff1616 1px 2px,#ff7c7c 2px 3px)"></div>
<div class="red" style="left:0;top:629px;width:1275px;height:2px"></div><div class="red" style="left:0;top:628px;width:1275px;height:1px;opacity:.3"></div>
<div class="red" style="left:0;top:24px;width:2px;height:607px"></div>
<div class="red" style="left:44px;top:24px;width:4px;height:607px"></div>
<div class="red" style="left:254.3px;top:24px;width:2.6px;height:607px"></div>
<div class="red" style="left:262px;top:24px;width:2px;height:607px"></div><div class="red" style="left:264px;top:26px;width:1px;height:602px;opacity:.35"></div>
<div class="red" style="left:1272.6px;top:24px;width:2.5px;height:607px"></div>

<div class="circ" style="left:9.5px;top:432px"><svg width="27" height="27" viewBox="0 0 27 27" style="position:absolute;left:0;top:0"><path d="M10.4 11.4 L14.4 6.9 V21" fill="none" stroke="#fff" stroke-width="1.7" stroke-linejoin="round"/></svg></div>
<div class="circ" style="left:116px;top:228px"><svg width="27" height="27" viewBox="0 0 27 27" style="position:absolute;left:0;top:0"><path d="M8.8 10.3 Q9 7 13.2 7 Q17.5 7 17.5 10.6 Q17.5 13 14.4 15.4 L8.6 20.2 H18.2" fill="none" stroke="#fff" stroke-width="1.6" stroke-linejoin="round"/></svg></div>
<div class="circ" style="left:836.5px;top:321px"><svg width="27" height="27" viewBox="0 0 27 27" style="position:absolute;left:0;top:0"><path d="M9 8.3 Q10.6 6.7 13.3 6.7 Q17.3 6.7 17.3 10 Q17.3 13.3 12.9 13.5 Q17.9 13.6 17.9 17.2 Q17.9 21.1 13.3 21.1 Q10.3 21.1 8.7 19.6" fill="none" stroke="#fff" stroke-width="1.6" stroke-linejoin="round"/></svg></div>
</body></html>
